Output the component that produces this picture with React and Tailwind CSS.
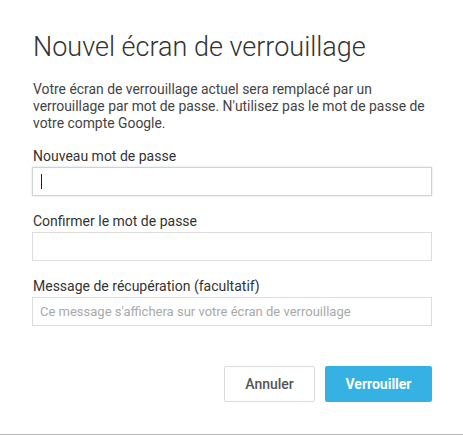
import React from "react";

const font = { fontFamily: "Roboto, 'Noto Sans', Arial, sans-serif" };

const Field = ({ label, placeholder, focused }) => (
  <div className="flex flex-col">
    <label className="text-[14px] leading-[16px] text-[#333] mb-[3px] pl-px">
      {label}
    </label>
    <div
      className={`h-[29px] w-[400px] bg-white flex items-center px-[7px] border ${
        focused
          ? "border-[#c9d6d6] shadow-[0_0_2px_rgba(180,200,200,0.6)]"
          : "border-[#dddddd]"
      }`}
    >
      {focused && <span className="ml-px w-px h-[15px] bg-[#222]" />}
      {placeholder && (
        <span className="text-[13px] text-[#a9a9a9] leading-none">
          {placeholder}
        </span>
      )}
    </div>
  </div>
);

export default function App() {
  return (
    <div
      className="relative w-[463px] h-[435px] bg-white overflow-hidden"
      style={font}
    >
      <div className="pl-[32px] pr-[31px] pt-[31px] flex flex-col">
        <h1 className="text-[27px] leading-[32px] font-light text-[#333] pl-px">
          Nouvel écran de verrouillage
        </h1>
        <p className="mt-[18px] text-[13.9px] leading-[17px] text-[#444] pl-px">
          Votre écran de verrouillage actuel sera remplacé par un verrouillage
          par mot de passe. N'utilisez pas le mot de passe de votre compte
          Google.
        </p>
        <div className="mt-[16px] flex flex-col gap-[17px]">
          <Field label="Nouveau mot de passe" focused />
          <Field label="Confirmer le mot de passe" />
          <Field
            label="Message de récupération (facultatif)"
            placeholder="Ce message s'affichera sur votre écran de verrouillage"
          />
        </div>
        <div className="mt-[40px] flex justify-end gap-[10px]">
          <button className="w-[91px] h-[36px] rounded-[2px] border border-[#dcdcdc] bg-white text-[14px] font-medium text-[#555]">
            Annuler
          </button>
          <button className="w-[107px] h-[36px] rounded-[2px] bg-[#35b1e4] text-[14px] font-bold text-white">
            Verrouiller
          </button>
        </div>
      </div>
      <div className="absolute bottom-0 left-0 right-0 h-px bg-[#b5b5b5]" />
    </div>
  );
}
